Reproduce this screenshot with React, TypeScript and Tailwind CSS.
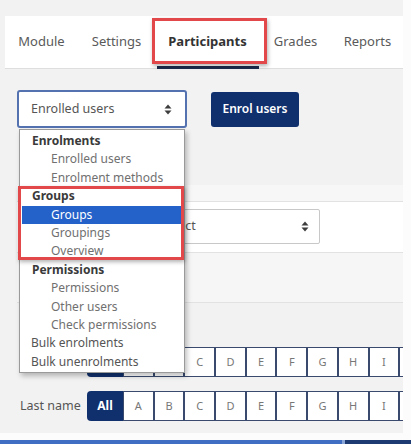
import React from "react";

const tabs = [
  { label: "Module", w: "w-[73px]" },
  { label: "Settings", w: "w-[77px]" },
  { label: "Participants", w: "w-[105px]", active: true },
  { label: "Grades", w: "w-[71px]" },
  { label: "Reports", w: "w-[73px]" },
];

const letters = ["A", "B", "C", "D", "E", "F", "G", "H", "I", ""];

const menu = [
  { label: "Enrolments", items: ["Enrolled users", "Enrolment methods"] },
  { label: "Groups", items: ["Groups", "Groupings", "Overview"] },
  { label: "Permissions", items: ["Permissions", "Other users", "Check permissions"] },
];

const SortArrows = () => (
  <svg width="8" height="11" viewBox="0 0 8 11" className="text-[#3d3d3d] shrink-0">
    <path d="M4 0.5 L7.5 4.5 H0.5 Z" fill="currentColor" />
    <path d="M4 10.5 L7.5 6.5 H0.5 Z" fill="currentColor" />
  </svg>
);

const LetterRow = ({ label }: { label: string }) => (
  <div className="flex items-center w-[420px] shrink-0">
    <div className="w-[70px] shrink-0 pl-[3px] text-[12.5px] text-[#555] whitespace-nowrap">{label}</div>
    <div className="flex h-[30px] shrink-0">
      <div className="w-[36px] shrink-0 h-full flex items-center justify-center bg-[#10306d] rounded-l-[4px] text-white text-[12px] font-bold">
        All
      </div>
      {letters.map((l, i) => (
        <div
          key={i}
          className="w-[30.7px] shrink-0 h-full flex items-center justify-center bg-white border border-[#3a4a6e] text-[11px] text-[#777]"
        >
          {l}
        </div>
      ))}
    </div>
  </div>
);

export default function App() {
  return (
    <div className="w-[411px] h-[444px] bg-[#fcfcfc] relative overflow-hidden font-['Noto_Sans',sans-serif]">
      <div className="w-[403px] h-[433px] bg-[#f2f2f2] pt-[16px] flex flex-col overflow-hidden">
        {/* tabs */}
        <nav className="ml-[5px] h-[53px] shrink-0 bg-white border-b border-[#dedede] flex">
          {tabs.map((t) => (
            <div
              key={t.label}
              className={`${t.w} shrink-0 relative flex items-center justify-center text-[13px] ${
                t.active ? "font-bold text-[#333]" : "text-[#5a5a5a]"
              }`}
            >
              {t.label}
              {t.active && <div className="absolute left-[2px] right-[1px] bottom-[-1px] h-[3px] bg-[#1b2b4d]" />}
            </div>
          ))}
        </nav>

        {/* select + button */}
        <div className="px-[17px] pt-[21px] flex items-center gap-[24px] shrink-0">
          <div className="w-[170px] h-[38px] bg-white border-2 border-[#5472b0] rounded-[3px] flex items-center justify-between pl-[12px] pr-[13px] text-[12.5px] text-[#555]">
            Enrolled users
            <SortArrows />
          </div>
          <button className="w-[88px] h-[35px] bg-[#10306d] rounded-[3px] text-white text-[12px] font-semibold">
            Enrol users
          </button>
        </div>

        {/* filter bands */}
        <div className="pl-[17px] mt-[57px] shrink-0">
          <div className="h-[17px] bg-[#f7f7f7] border-b border-[#e2e2e2]" />
          <div className="h-[51px] bg-white border-b border-[#e2e2e2] flex items-start">
            <div className="ml-[131px] mt-[7px] w-[172px] h-[35px] bg-white border border-[#c8c8c8] rounded-[2px] flex items-center justify-between pl-[12px] pr-[10px] text-[12.5px] text-[#555]">
              Select
              <SortArrows />
            </div>
          </div>
          <div className="h-[50px] bg-[#f6f6f6] border-b border-[#e2e2e2]" />
        </div>

        {/* initials bars */}
        <div className="w-[403px] pl-[17px] mt-[44px] flex flex-col gap-[14px] overflow-hidden">
          <LetterRow label="First name" />
          <LetterRow label="Last name" />
        </div>
      </div>

      {/* taskbar strip */}
      <div className="absolute left-0 right-0 bottom-0 h-[4px] flex">
        <div className="w-[342px] bg-[#3f6ec2]" />
        <div className="w-[3px] bg-[#8aa6d8]" />
        <div className="flex-1 bg-[#1d3a72]" />
      </div>

      {/* open select list */}
      <div className="absolute left-[19px] top-[129px] w-[166px] bg-white border border-[#9a9a9a] shadow-[2px_3px_5px_rgba(0,0,0,0.25)] pt-[2px] pb-[1px] text-[12px] leading-[18.4px]">
        {menu.map((g) => (
          <div key={g.label}>
            <div className="h-[18.4px] pl-[12px] font-bold text-[#3a3a3a]">{g.label}</div>
            {g.items.map((it) => {
              const hi = g.label === "Groups" && it === "Groups";
              return (
                <div
                  key={it}
                  className={`h-[18.4px] pl-[29px] mx-[2px] ${hi ? "bg-[#2462c9] text-white" : "text-[#707070]"}`}
                >
                  {it}
                </div>
              );
            })}
          </div>
        ))}
        <div className="h-[18.4px] pl-[11px] text-[#555]">Bulk enrolments</div>
        <div className="h-[18.4px] pl-[11px] text-[#555]">Bulk unenrolments</div>
      </div>

      {/* red callouts */}
      <div className="absolute left-[152px] top-[18px] w-[115px] h-[46px] border-[3px] border-[#e2474a] shadow-[1px_2px_4px_rgba(0,0,0,0.3)]" />
      <div className="absolute left-[18px] top-[186px] w-[166px] h-[74px] border-[3px] border-[#e2474a] shadow-[1px_2px_4px_rgba(0,0,0,0.3)]" />
    </div>
  );
}
